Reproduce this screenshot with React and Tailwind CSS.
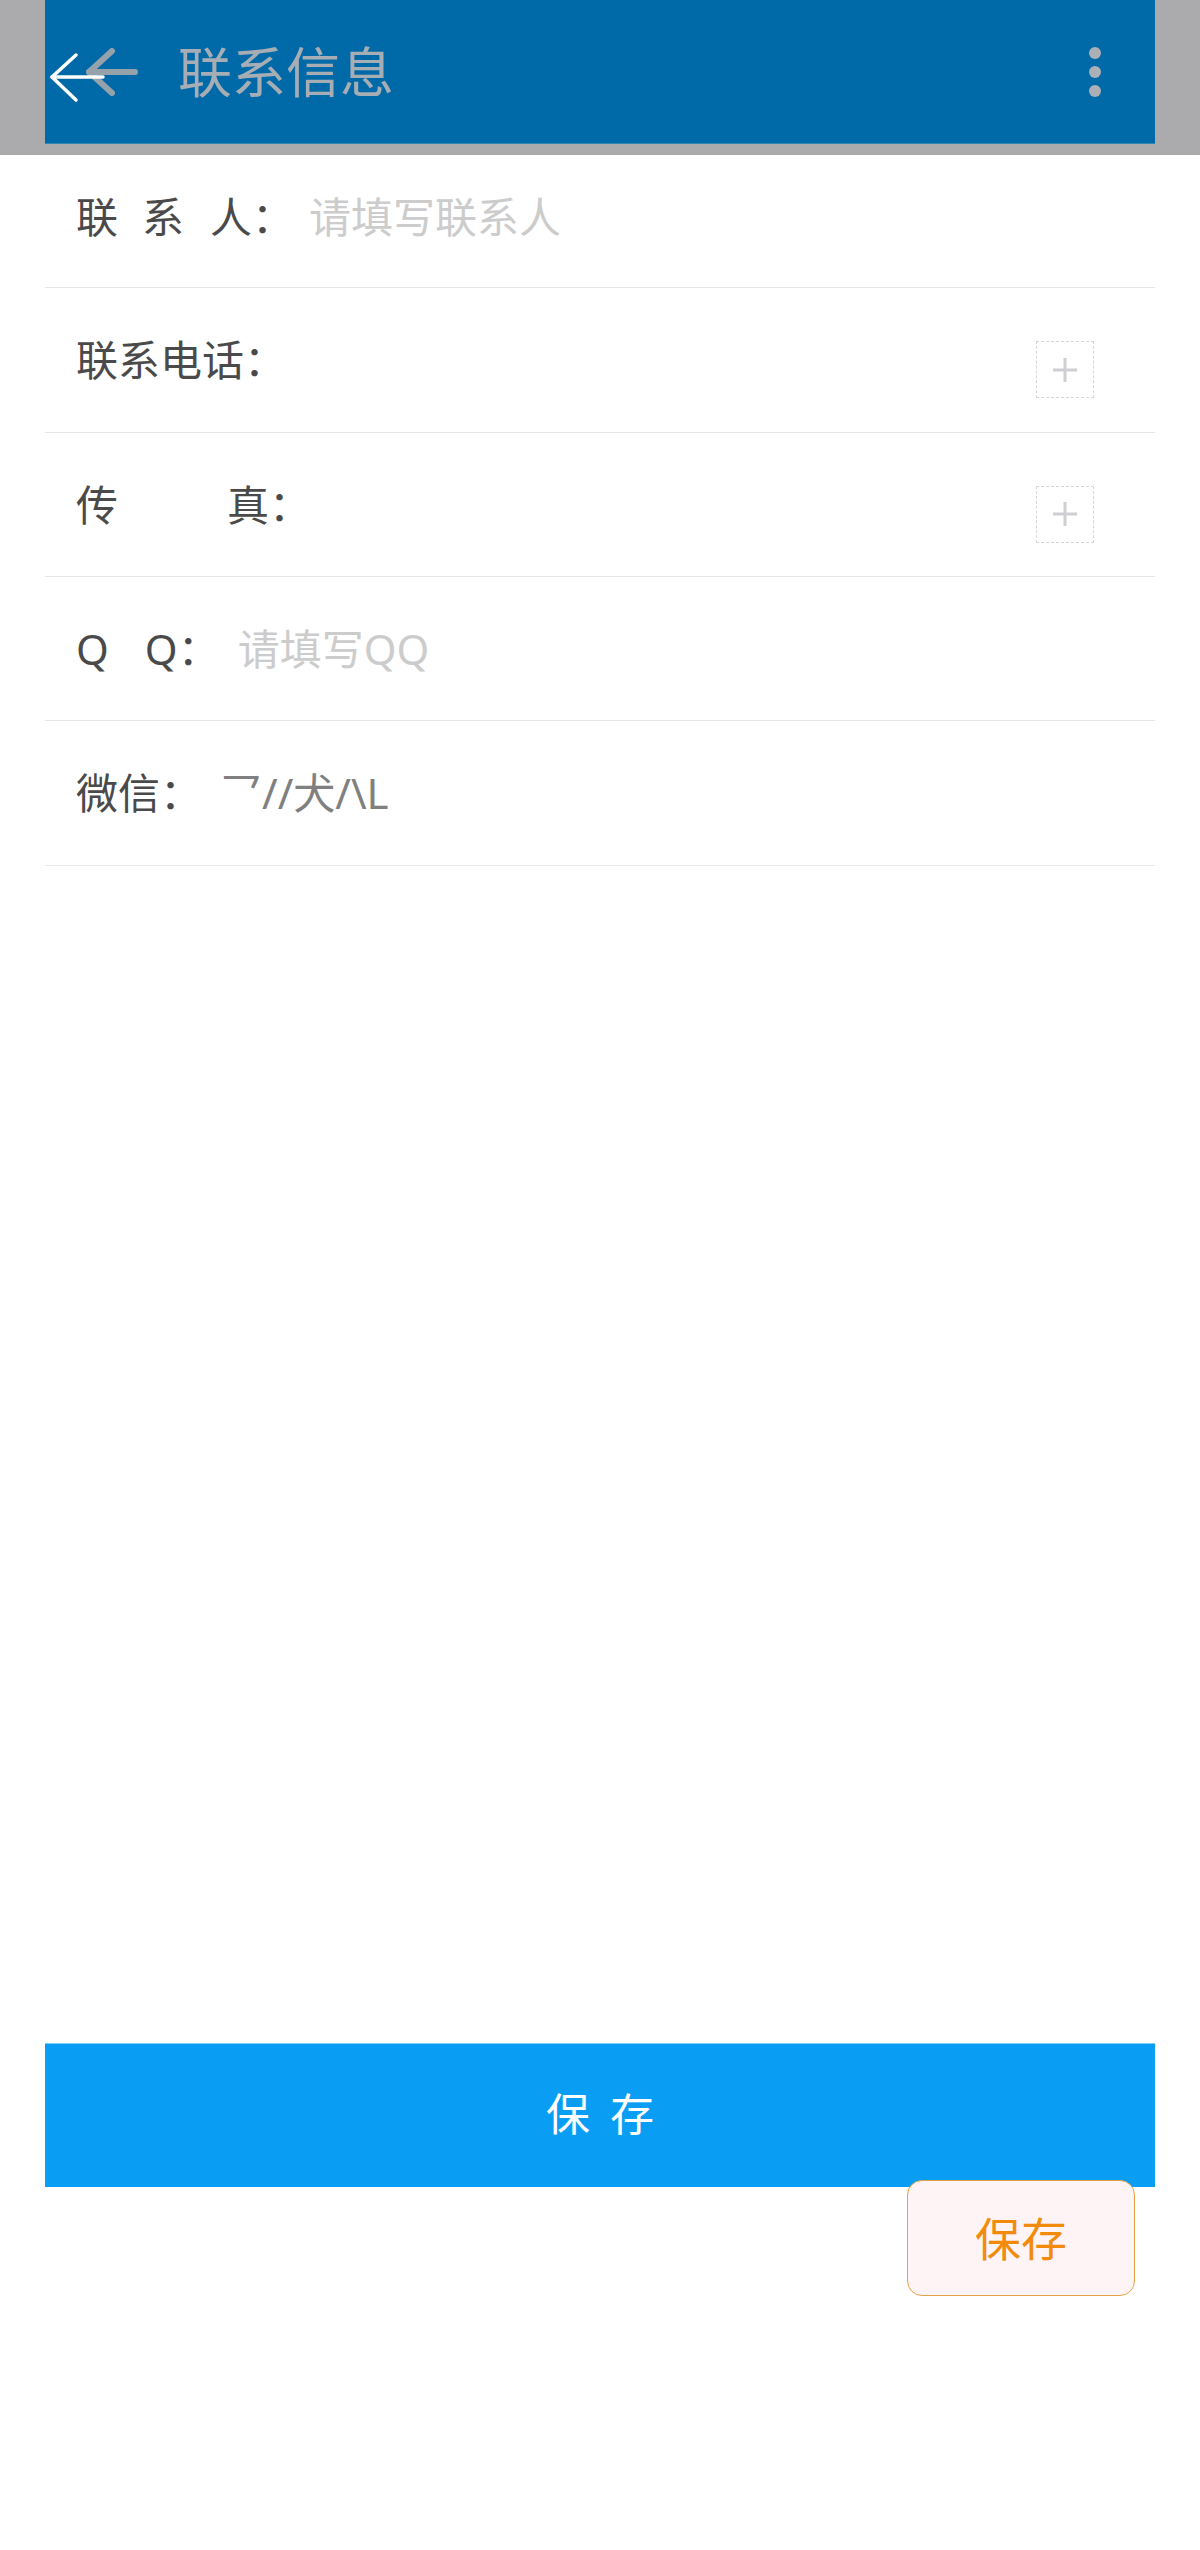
import React from "react";

const FONT = { fontFamily: '"Noto Sans", "Noto Sans CJK SC", sans-serif' };

function PlusBox() {
  return (
    <div className="mt-[19px] mr-[61px] ml-auto flex h-[57px] w-[58px] items-center justify-center border border-dashed border-[#d6d6d6]">
      <svg width="26" height="26" viewBox="0 0 26 26">
        <path d="M13 1 V25 M1 13 H25" stroke="#cfcfd3" strokeWidth="3" fill="none" />
      </svg>
    </div>
  );
}

export default function App() {
  return (
    <div className="min-h-[2550px] w-[1200px] bg-white" style={FONT}>
      {/* Header */}
      <div className="h-[155px] bg-[#abaaac] px-[45px]">
        <div className="flex h-[144px] items-center border-b border-[#2f86ae] bg-[#0069a7]">
          <svg width="100" height="70" viewBox="0 0 100 70" className="shrink-0">
            <g stroke="#9ea6ad" strokeWidth="6" fill="none" strokeLinecap="round" strokeLinejoin="round" opacity="0.95">
              <path d="M67 14 L44 35 L67 56" />
              <path d="M44 35 H90" />
            </g>
            <g stroke="#ffffff" strokeWidth="3.5" fill="none" strokeLinecap="round" strokeLinejoin="round">
              <path d="M31 18 L7 40 L31 63" />
              <path d="M7 40 H58" />
            </g>
          </svg>
          <div className="ml-[33px] text-[54px] leading-none text-[#a6adb4]">联系信息</div>
          <div className="ml-auto mr-[54px] flex flex-col gap-[7px]">
            <div className="h-[12px] w-[12px] rounded-full bg-[#aab0b5]" />
            <div className="h-[12px] w-[12px] rounded-full bg-[#aab0b5]" />
            <div className="h-[12px] w-[12px] rounded-full bg-[#aab0b5]" />
          </div>
        </div>
      </div>

      {/* Form rows */}
      <div className="mx-[45px] text-[42px] leading-none">
        <div className="flex h-[133px] items-center border-b border-[#e6e6e6] pb-[8px] pl-[31px]">
          <span className="text-[#4a4a4a]">
            <span className="mr-[24px]">联</span>
            <span className="mr-[26px]">系</span>
            <span>人</span>
            <span>：</span>
          </span>
          <span className="ml-[15px] text-[#cccccc]">请填写联系人</span>
        </div>

        <div className="flex h-[145px] items-center border-b border-[#e6e6e6] pl-[31px]">
          <span className="text-[#4a4a4a]">联系电话：</span>
          <PlusBox />
        </div>

        <div className="flex h-[144px] items-center border-b border-[#e6e6e6] pl-[31px]">
          <span className="text-[#4a4a4a]">
            <span className="mr-[109px]">传</span>
            <span>真</span>
            <span>：</span>
          </span>
          <PlusBox />
        </div>

        <div className="flex h-[144px] items-center border-b border-[#e6e6e6] pl-[31px]">
          <span className="text-[#4a4a4a]">
            <span className="mr-[36px]">Q</span>
            <span>Q</span>
            <span>：</span>
          </span>
          <span className="ml-[18px] text-[#cccccc]">请填写QQ</span>
        </div>

        <div className="flex h-[145px] items-center border-b border-[#e6e6e6] pl-[31px]">
          <span className="text-[#4a4a4a]">微信：</span>
          <span className="ml-[18px] text-[#808080]">乛//犬/\L</span>
        </div>
      </div>

      {/* Save button */}
      <div className="mx-[45px] mt-[1177px] flex h-[144px] items-center justify-center border-t border-[#7fd0f7] bg-[#099ef4] pb-[3px]">
        <span className="pl-[20px] text-[44px] leading-none tracking-[20px] text-white">保存</span>
      </div>

      {/* Floating orange save */}
      <div className="-mt-[7px] mr-[65px] flex justify-end">
        <div className="flex h-[116px] w-[228px] items-center justify-center rounded-[15px] border border-[#e5a244] bg-[#fff4f5] pb-[1px]">
          <span className="text-[46px] leading-none text-[#f28b0c]">保存</span>
        </div>
      </div>
    </div>
  );
}
